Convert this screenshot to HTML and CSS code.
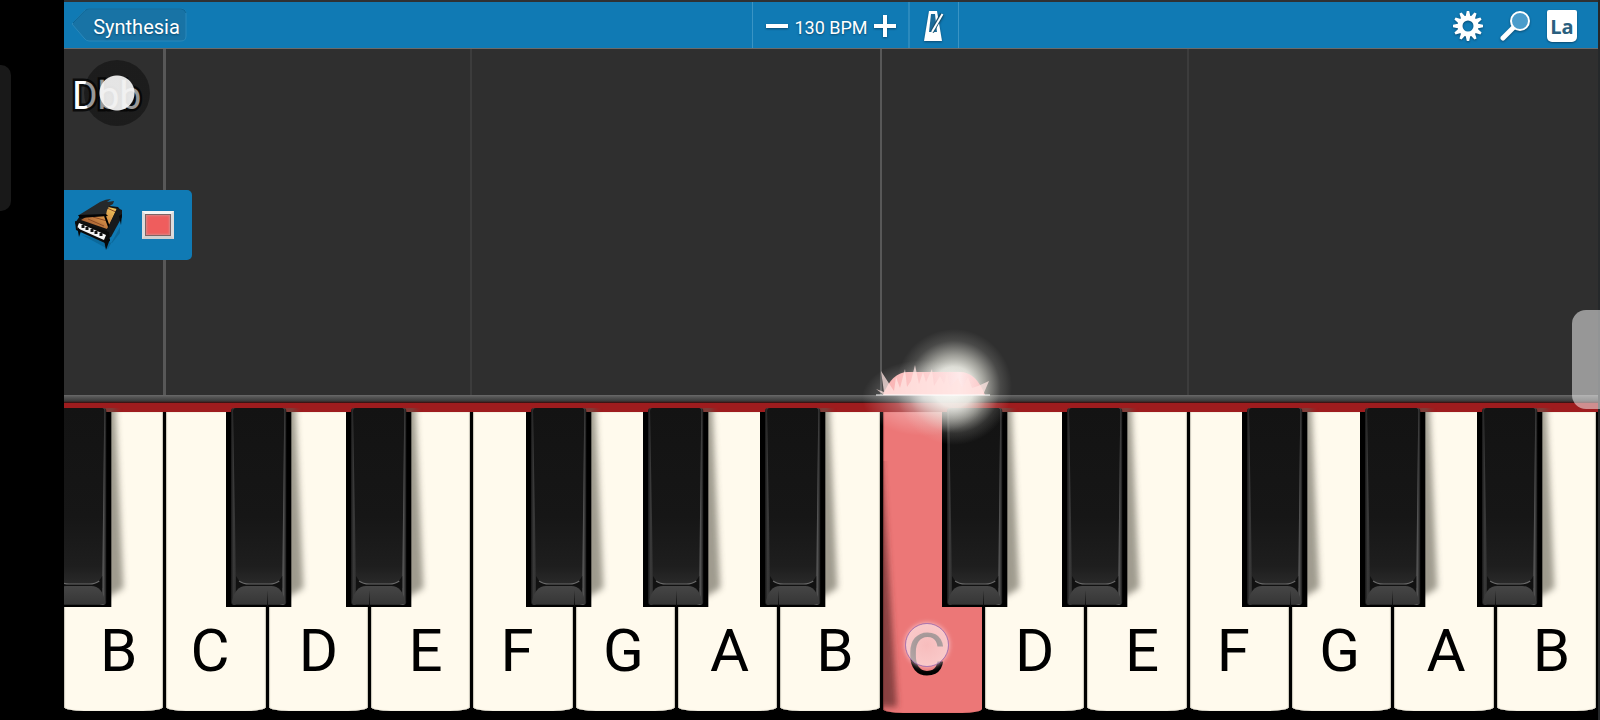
FILE: index.html
```html
<!DOCTYPE html>
<html lang="en">
<head>
  <meta charset="UTF-8">
  <meta name="viewport" content="width=device-width, initial-scale=1.0">
  <title>Synthesia</title>
  <link rel="stylesheet" href="styles.css">
</head>
<body>
  <!-- shared shape for all black keys -->
  <svg class="defs" width="0" height="0" aria-hidden="true">
    <defs>
      <linearGradient id="side" x1="0" x2="1" y1="0" y2="0">
        <stop offset="0" stop-color="#181818"/>
        <stop offset=".05" stop-color="#3c3c3c"/>
        <stop offset=".1" stop-color="#262626"/>
        <stop offset=".88" stop-color="#2c2c2c"/>
        <stop offset=".94" stop-color="#5c5c5c"/>
        <stop offset="1" stop-color="#161616"/>
      </linearGradient>
      <linearGradient id="face" x1="0" x2="0" y1="0" y2="1">
        <stop offset="0" stop-color="#131313"/>
        <stop offset=".6" stop-color="#161616"/>
        <stop offset=".88" stop-color="#1e1e1e"/>
        <stop offset="1" stop-color="#2c2c2c"/>
      </linearGradient>
      <linearGradient id="cap" x1="0" x2="0" y1="0" y2="1">
        <stop offset="0" stop-color="#464646"/>
        <stop offset="1" stop-color="#363636"/>
      </linearGradient>
      <filter id="soft" x="-100%" width="300%" y="-10%" height="120%">
        <feGaussianBlur stdDeviation="3"/>
      </filter>
      <symbol id="black-key" viewBox="0 0 85 200" preserveAspectRatio="none">
        <path d="M58 -4H69L77 180L64 188H58Z" fill="#5f5b50" opacity=".6" filter="url(#soft)"/>
        <rect x="0" y="4" width="65" height="195" fill="#000"/>
        <path d="M5 3Q5 0 8 0H57Q60 0 60 3V194Q60 197 57 197H8Q5 197 5 194Z" fill="url(#side)"/>
        <path d="M7 3Q7 0 10 0H56Q58 0 58 3L56 168V180H10V168Z" fill="url(#face)"/>
        <path d="M10 168Q14 176 22 176H44Q52 176 56 168V188H10Z" fill="#111"/>
        <path d="M13 173Q17 176 23 176H43Q49 176 53 173" fill="none" stroke="#6a6a6a" stroke-width="1.2"/>
        <path d="M6 194Q9 178 20 178H45Q56 178 59 194Q59 196 56 196H9Q6 196 6 194Z" fill="url(#cap)"/>
      </symbol>
    </defs>
  </svg>

  <div class="app">
    <aside class="gutter"><div class="gutter-handle"></div></aside>

    <main class="stage">
      <header class="toolbar">
        <div class="toolbar-left">
          <button class="back">
            <svg class="back-shape" viewBox="0 0 116 34" aria-hidden="true">
              <path d="M1 16L13 3Q15 1 18 1H110Q115 1 115 6V28Q115 33 110 33H18Q15 33 13 30Z" fill="#1873a5" stroke="#2a88ba"/>
              <path d="M2 15L14 2.500Q16 1 18 1H110Q114 1 115 5" fill="none" stroke="#0c6595"/>
            </svg>
            <span>Synthesia</span>
          </button>
        </div>
        <div class="tempo">
          <button class="step" aria-label="Slower">
            <svg width="24" height="24" viewBox="0 0 24 24"><path d="M1 10H23V14H1Z" fill="#fff"/></svg>
          </button>
          <span class="bpm">130 BPM</span>
          <button class="step" aria-label="Faster">
            <svg width="24" height="24" viewBox="0 0 24 24"><path d="M1 10H10V1H14V10H23V14H14V23H10V14H1Z" fill="#fff"/></svg>
          </button>
        </div>
        <div class="toolbar-right">
          <button class="metronome" aria-label="Metronome">
            <svg width="22" height="32" viewBox="0 0 22 32">
              <path d="M6 1H14L19 31H1Z" fill="#fff"/>
              <path d="M8 4H12L14 22H6Z" fill="#1a6a98"/>
              <path d="M9 22L19 4" stroke="#16506f" stroke-width="4"/>
              <path d="M9 22L19.500 4" stroke="#fff" stroke-width="2"/>
            </svg>
          </button>
          <div class="tools">
            <button aria-label="Settings">
              <svg width="30" height="32" viewBox="0 0 30 32">
                <g transform="translate(15 16)" fill="#fff">
                  <g id="teeth">
                    <path d="M-2.500 -9L-1.200 -15H1.200L2.500 -9ZM-2.500 9L-1.200 15H1.200L2.500 9Z"/>
                    <path transform="rotate(30)" d="M-2.500 -9L-1.200 -15H1.200L2.500 -9ZM-2.500 9L-1.200 15H1.200L2.500 9Z"/>
                    <path transform="rotate(60)" d="M-2.500 -9L-1.200 -15H1.200L2.500 -9ZM-2.500 9L-1.200 15H1.200L2.500 9Z"/>
                  </g>
                  <use href="#teeth" transform="rotate(90)"/>
                  <circle r="8" fill="none" stroke="#fff" stroke-width="5"/>
                </g>
              </svg>
            </button>
            <button aria-label="Zoom">
              <svg width="30" height="32" viewBox="0 0 30 32">
                <path d="M13 18L3 28" stroke="#fff" stroke-width="5" stroke-linecap="round"/>
                <circle cx="20" cy="11" r="9" fill="#4a9ccb" stroke="#fff" stroke-width="2"/>
              </svg>
            </button>
            <button class="note-names" aria-label="Note names">La</button>
          </div>
        </div>
      </header>

      <section class="roll">
        <div class="lanes">
          <div class="lane lane-b"></div>
          <div class="lane lane-c strong"></div>
          <div class="lane lane-f"></div>
          <div class="lane lane-c"></div>
          <div class="lane lane-f"></div>
        </div>
        <div class="chord">
          <span class="chord-name">Dbb</span>
          <div class="assist"></div>
        </div>
        <div class="track">
          <button class="instrument" aria-label="Grand piano">
            <svg width="50" height="52" viewBox="0 0 50 52">
              <defs>
                <linearGradient id="wood" x1="0" x2="1" y1="1" y2="0">
                  <stop offset="0" stop-color="#8a4325"/>
                  <stop offset=".5" stop-color="#d08a45"/>
                  <stop offset="1" stop-color="#f6cf5e"/>
                </linearGradient>
              </defs>
              <path d="M8 36L34 50L46 28L46 34L38 44Z" fill="#075781" opacity=".5"/>
              <path d="M1 24L6 17L28 6L44 8L48 13L35 38L4 28Z" fill="#111"/>
              <path d="M7 21L30 7L43 10L33 30Z" fill="url(#wood)"/>
              <path d="M14 20L30 27M19 18L33 22M33 9L42 13" stroke="#8b4a25" stroke-width="1"/>
              <path d="M5 16L26 3Q32 0 37 0L33 3L40 2L39 5Q33 7 32 16L7 18Z" fill="#26292b"/>
              <path d="M4 16L32 15L34 17L6 19Z" fill="#050505"/>
              <path d="M31 17L35 28" stroke="#000" stroke-width="2"/>
              <path d="M43 9L48 11V18L37 38L33 40V31Z" fill="#17191b"/>
              <path d="M1 22L35 33L36 42L31 44L2 31Z" fill="#0b0b0b"/>
              <path d="M5 24L32 36L30 41L3 29Z" fill="#f7f7f7"/>
              <path d="M9 26V29M13 28V31M18 30V33M22 32V35M27 34V37" stroke="#111" stroke-width="3"/>
              <path d="M3 27L5 38L7 32ZM30 41L32 51L36 40ZM45 17L47 26L48 15Z" fill="#070707"/>
            </svg>
          </button>
          <button class="swatch" aria-label="Track colour"></button>
        </div>
      </section>

      <div class="rail"></div>
      <div class="felt"></div>

      <section class="keyboard">
        <div class="slot b lead">
          <button class="white">B</button>
          <button class="black" aria-label="A sharp"><svg><use href="#black-key"/></svg></button>
        </div>
        <div class="slot c">
          <button class="white">C</button>
          <button class="black" aria-label="C sharp"><svg><use href="#black-key"/></svg></button>
        </div>
        <div class="slot d seam">
          <button class="white">D</button>
          <button class="black" aria-label="D sharp"><svg><use href="#black-key"/></svg></button>
        </div>
        <div class="slot e seam">
          <button class="white">E</button>
        </div>
        <div class="slot f">
          <button class="white">F</button>
          <button class="black" aria-label="F sharp"><svg><use href="#black-key"/></svg></button>
        </div>
        <div class="slot g seam">
          <button class="white">G</button>
          <button class="black" aria-label="G sharp"><svg><use href="#black-key"/></svg></button>
        </div>
        <div class="slot a seam">
          <button class="white">A</button>
          <button class="black" aria-label="A sharp"><svg><use href="#black-key"/></svg></button>
        </div>
        <div class="slot b seam">
          <button class="white">B</button>
        </div>
        <div class="slot c pressed">
          <button class="white">C</button>
          <svg class="press-shade" viewBox="0 0 24 250" aria-hidden="true">
            <path d="M-8 -10H-2L14 246H-8Z" fill="#5e2c2c" opacity=".7" filter="url(#soft)"/>
          </svg>
          <button class="black" aria-label="C sharp"><svg><use href="#black-key"/></svg></button>
          <svg class="spark" viewBox="0 0 180 140" aria-hidden="true">
            <defs>
              <radialGradient id="flash">
                <stop offset="0" stop-color="#fafaf4"/>
                <stop offset=".35" stop-color="#f0f0e8" stop-opacity=".9"/>
                <stop offset=".55" stop-color="#e6e6dc" stop-opacity=".6"/>
                <stop offset=".8" stop-color="#e0e0d8" stop-opacity=".15"/>
                <stop offset="1" stop-color="#e0e0d8" stop-opacity="0"/>
              </radialGradient>
              <radialGradient id="haze">
                <stop offset="0" stop-color="#fff" stop-opacity=".6"/>
                <stop offset=".5" stop-color="#fff" stop-opacity=".25"/>
                <stop offset="1" stop-color="#fff" stop-opacity="0"/>
              </radialGradient>
              <linearGradient id="flame" x1="0" x2="1" y1="0" y2="0">
                <stop offset="0" stop-color="#f9b0b0"/>
                <stop offset=".35" stop-color="#fdcaca"/>
                <stop offset=".75" stop-color="#feeaea"/>
                <stop offset="1" stop-color="#fbc4c4"/>
              </linearGradient>
            </defs>
            <ellipse cx="104" cy="67" rx="58" ry="58" fill="url(#flash)"/>
            <ellipse cx="74" cy="78" rx="62" ry="38" fill="url(#haze)"/>
            <path d="M33 75Q42 52 58 52H110Q126 52 135 75Z" fill="url(#flame)"/>
            <path d="M34 75L26 69L34 72L31 51L40 65L44 71L46 57L50 68L55 49L57 67L61 61L65 45L69 64L73 52L76 62L82 49L84 66L90 56L94 64L97 53L100 67L108 58L112 68L118 57L122 68L128 66L139 61L133 75Z" fill="#ffe4e2" opacity=".75"/>
            <path d="M26 75H140" stroke="#fff" stroke-width="1"/>
          </svg>
          <div class="touch"></div>
        </div>
        <div class="slot d seam">
          <button class="white">D</button>
          <button class="black" aria-label="D sharp"><svg><use href="#black-key"/></svg></button>
        </div>
        <div class="slot e seam">
          <button class="white">E</button>
        </div>
        <div class="slot f">
          <button class="white">F</button>
          <button class="black" aria-label="F sharp"><svg><use href="#black-key"/></svg></button>
        </div>
        <div class="slot g seam">
          <button class="white">G</button>
          <button class="black" aria-label="G sharp"><svg><use href="#black-key"/></svg></button>
        </div>
        <div class="slot a seam">
          <button class="white">A</button>
          <button class="black" aria-label="A sharp"><svg><use href="#black-key"/></svg></button>
        </div>
        <div class="slot b seam">
          <button class="white">B</button>
        </div>
      </section>
    </main>
    <div class="edge-handle"></div>
  </div>
</body>
</html>
```
FILE: styles.css
```css
* {
  box-sizing: border-box;
}
body {
  margin: 0;
  background: #000;
  color: #fff;
  font-family: Roboto, "Liberation Sans", sans-serif;
}
button {
  margin: 0;
  padding: 0;
  border: none;
  background: none;
  color: inherit;
  font-family: inherit;
  cursor: pointer;
}
svg {
  display: block;
}
.defs {
  position: absolute;
}
.app {
  position: relative;
  display: flex;
  min-height: 100vh;
  border-right: 2px solid #25282a;
}

/* left gutter */
.gutter {
  width: 64px;
  flex: none;
  padding-top: 65px;
}
.gutter-handle {
  width: 11px;
  height: 146px;
  background: #191919;
  border-radius: 0 10px 10px 0;
}
.stage {
  flex: 1;
  min-width: 0;
  display: flex;
  flex-direction: column;
  overflow: hidden;
  border-top: 2px solid #2f3133;
}

/* toolbar */
.toolbar {
  display: grid;
  grid-template-columns: 1fr auto 1fr;
  height: 47px;
  background: #107ab4;
  border-bottom: 1px solid #6a6a6a;
}
.toolbar-left,
.toolbar-right,
.tools,
.tempo {
  display: flex;
  align-items: center;
}
.toolbar-left {
  padding-left: 7px;
}
.back {
  position: relative;
  width: 116px;
  height: 34px;
  padding: 4px 0 0 15px;
  font-size: 20px;
  text-shadow: 0 1px 2px #0a4a70;
}
.back-shape {
  position: absolute;
  inset: 0;
}
.back span {
  position: relative;
}
.tempo {
  gap: 4px;
  padding: 2px 11px 0 12px;
  border-left: 1px solid #3a94c4;
  border-right: 2px solid #2b8abd;
}
.bpm {
  width: 76px;
  padding-top: 2px;
  text-align: center;
  font-size: 18px;
  text-shadow: 0 1px 2px #0a4a70;
}
.tempo svg,
.metronome svg,
.tools svg {
  filter: drop-shadow(0 1px 1px #0a4a70);
}
.toolbar-right {
  justify-content: space-between;
}
.metronome {
  height: 100%;
  width: 49px;
  display: flex;
  align-items: center;
  justify-content: center;
  padding-top: 2px;
  border-right: 1px solid #3a94c4;
}
.tools {
  gap: 17px;
  padding: 2px 21px 0 0;
}
.note-names {
  width: 30px;
  height: 32px;
  padding-top: 2px;
  border-radius: 2px 2px 5px 5px;
  background: #fff;
  color: #2a5f7e;
  font-family: "Open Sans", sans-serif;
  font-size: 20px;
  font-weight: bold;
  line-height: 28px;
  box-shadow: 0 1px 2px #0a4a70;
}

/* falling notes area */
.roll {
  position: relative;
  flex: 1;
  min-height: 240px;
  padding-top: 11px;
  background: #2f2f2f;
}
.lanes {
  position: absolute;
  inset: 0;
  display: grid;
  grid-template-columns: repeat(15, 1fr);
  column-gap: 3px;
  padding-right: 2px;
}
.lane {
  margin-left: -3px;
}
.lane-b {
  grid-column: span 1;
}
.lane-c {
  grid-column: span 3;
  border-left: 2px solid #585858;
}
.lane-c.strong {
  border-left-width: 3px;
}
.lane-f {
  grid-column: span 4;
  border-left: 2px solid #3c3c3c;
}
.chord {
  position: relative;
  width: 66px;
  height: 66px;
  margin-left: 8px;
}
.chord-name {
  font-size: 39px;
  line-height: 72px;
  paint-order: stroke fill;
  -webkit-text-stroke: 5px #0c0c0c;
}
.assist {
  position: absolute;
  top: 0;
  left: 12px;
  width: 66px;
  height: 66px;
  border-radius: 50%;
  background: radial-gradient(circle, rgba(240, 240, 240, 0.94) 17px, rgba(0, 0, 0, 0.4) 18px);
}
.track {
  position: relative;
  display: flex;
  align-items: center;
  gap: 18px;
  width: 128px;
  height: 70px;
  margin-top: 64px;
  padding-left: 10px;
  background: #107ab4;
  border-radius: 0 5px 5px 0;
}
.swatch {
  width: 32px;
  height: 28px;
  border: 3px solid #dcdcdc;
  border-top-color: #f4f4f4;
  border-bottom-color: #cfcfcf;
  background: #ef5d5d;
  box-shadow: inset 0 0 0 1px #7c6464, inset 0 0 2px 2px #d98585;
}
.rail {
  height: 8px;
  background: linear-gradient(#6a6a6a, #565656 2px, #3a3a3a 6px, #3c0808);
}
.felt {
  height: 9px;
  background: #9e1c1e;
}

/* keyboard */
.keyboard {
  display: grid;
  grid-template-columns: repeat(15, 1fr);
  column-gap: 3px;
  height: 308px;
  padding: 0 2px 9px 0;
  background: #000;
}
.slot {
  position: relative;
}
.white {
  width: 100%;
  height: 100%;
  padding-top: 178px;
  border-radius: 0 0 20px 20px / 0 0 4px 4px;
  background: #fffaed;
  box-shadow: inset 1px 0 1px #c9c5b8, inset -1px 0 1px #c9c5b8;
  color: #000;
  font-size: 60px;
  line-height: 70px;
}
.c .white,
.f .white {
  padding-right: 12px;
}
.g .white {
  padding-right: 4px;
}
.a .white {
  padding-left: 4px;
}
.b .white,
.e .white {
  padding-left: 10px;
}
.black {
  position: absolute;
  z-index: 2;
  top: -4px;
  width: 86%;
  height: 200px;
}
.black svg {
  width: 100%;
  height: 100%;
}
.c .black {
  left: 60%;
}
.d .black {
  left: 78%;
}
.f .black {
  left: 53%;
}
.g .black {
  left: 68%;
}
.a .black {
  left: 83%;
}
.lead .black {
  left: -18%;
}
.seam::before {
  content: '';
  position: absolute;
  z-index: 3;
  top: 178px;
  left: -2px;
  width: 1px;
  height: 16px;
  background: linear-gradient(transparent, #0c0c0c);
}

/* key being played */
.pressed .white {
  height: calc(100% + 2px);
  padding-top: 184px;
  background: #ec7777;
  box-shadow: inset 1px 0 1px #a04848;
}
.press-shade {
  position: absolute;
  bottom: 0;
  left: 0;
  width: 24px;
  height: 250px;
}
.spark {
  position: absolute;
  z-index: 4;
  top: -92px;
  left: -33px;
  width: 180px;
  height: 140px;
  pointer-events: none;
}
.touch {
  position: absolute;
  z-index: 4;
  top: 211px;
  left: 22px;
  width: 44px;
  height: 44px;
  border: 1px solid #a878b4;
  border-radius: 50%;
  background: radial-gradient(circle, rgba(255, 235, 235, 0.6), rgba(255, 235, 235, 0.75));
  box-shadow: 0 0 5px #f8c8d0;
  pointer-events: none;
}

.edge-handle {
  position: absolute;
  z-index: 5;
  top: 310px;
  right: -2px;
  width: 28px;
  height: 99px;
  border-radius: 14px 0 0 14px;
  background: rgba(255, 255, 255, 0.5);
}
```
